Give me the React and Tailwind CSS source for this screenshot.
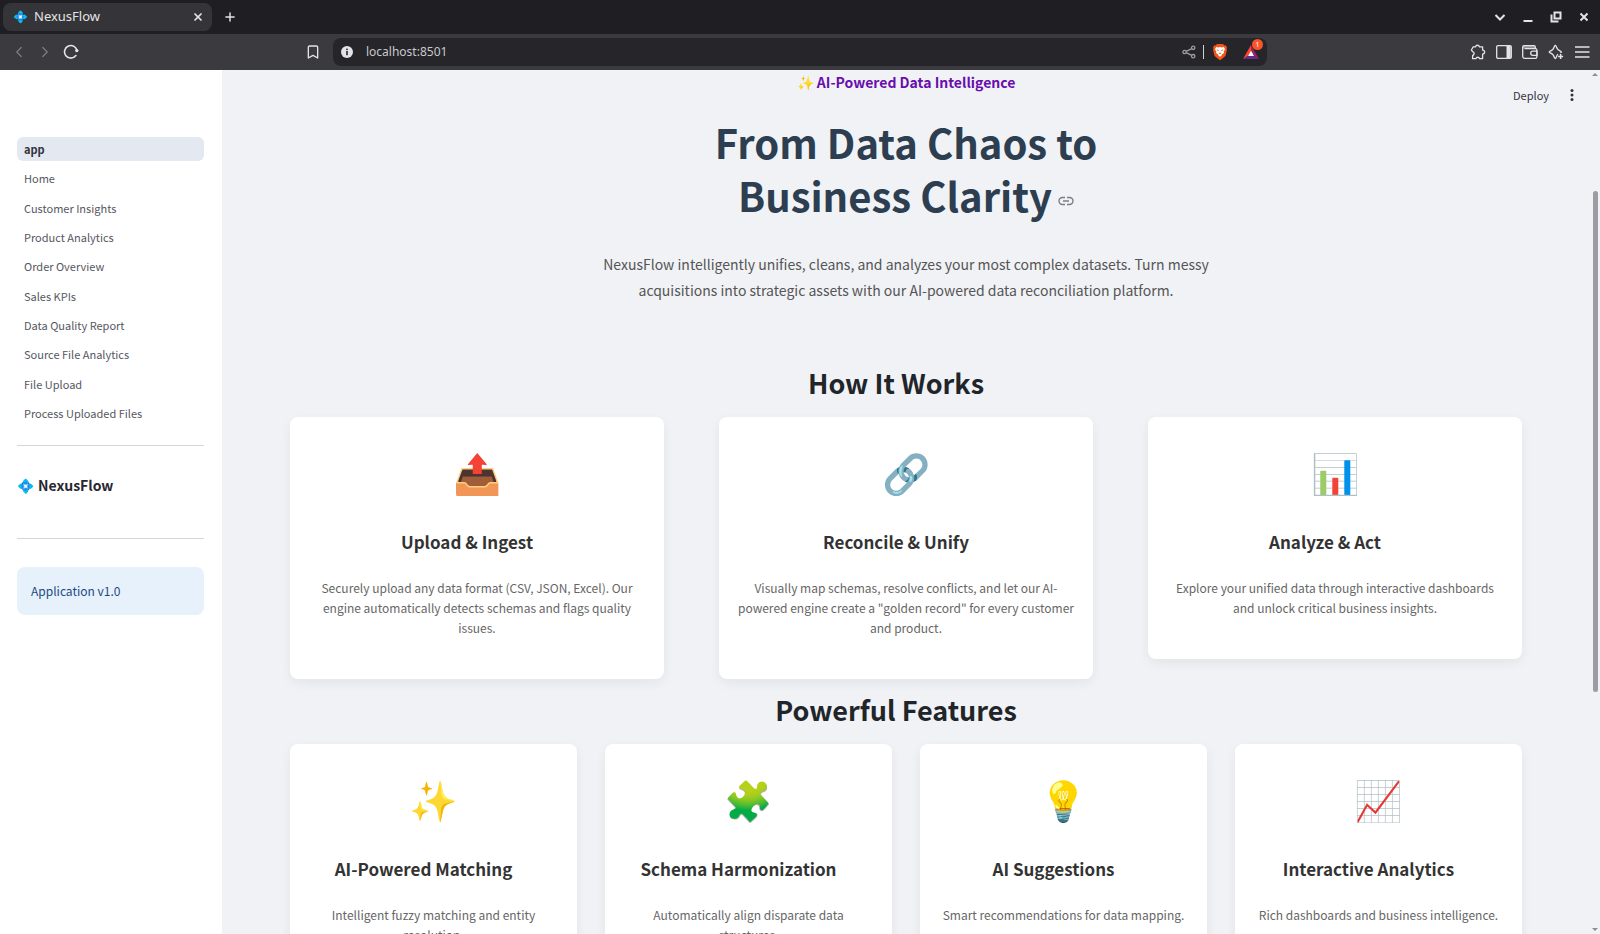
import { Bookmark, ChevronLeft, ChevronRight, Plus, X } from "lucide-react";

const pages = [
  "app",
  "Home",
  "Customer Insights",
  "Product Analytics",
  "Order Overview",
  "Sales KPIs",
  "Data Quality Report",
  "Source File Analytics",
  "File Upload",
  "Process Uploaded Files",
];

const steps = [
  {
    icon: "📤",
    title: "Upload & Ingest",
    text: "Securely upload any data format (CSV, JSON, Excel). Our engine automatically detects schemas and flags quality issues.",
  },
  {
    icon: "🔗",
    title: "Reconcile & Unify",
    text: 'Visually map schemas, resolve conflicts, and let our AI-powered engine create a "golden record" for every customer and product.',
  },
  {
    icon: "📊",
    title: "Analyze & Act",
    text: "Explore your unified data through interactive dashboards and unlock critical business insights.",
  },
];

const features = [
  { icon: "✨", title: "AI-Powered Matching", text: "Intelligent fuzzy matching and entity resolution." },
  { icon: "🧩", title: "Schema Harmonization", text: "Automatically align disparate data structures." },
  { icon: "💡", title: "AI Suggestions", text: "Smart recommendations for data mapping." },
  { icon: "📈", title: "Interactive Analytics", text: "Rich dashboards and business intelligence." },
];

function ReloadIcon() {
  return (
    <svg viewBox="0 0 16 16" className="size-4" fill="none" stroke="currentColor" strokeWidth="1.6" strokeLinecap="round">
      <path d="M12.9 11.6a6.3 6.3 0 1 1 1.2-4.6" />
      <circle cx="13.8" cy="6.6" r="1.7" fill="currentColor" stroke="none" />
    </svg>
  );
}

function InfoIcon() {
  return (
    <svg viewBox="0 0 12 12" className="size-3">
      <circle cx="6" cy="6" r="6" fill="#e4e4e6" />
      <rect x="5.2" y="5" width="1.6" height="4.2" fill="#26252a" />
      <circle cx="6" cy="3.3" r="0.9" fill="#26252a" />
    </svg>
  );
}

function ShareIcon() {
  return (
    <svg viewBox="0 0 14 14" className="size-[14px]" fill="none" stroke="currentColor" strokeWidth="1.3">
      <circle cx="2.6" cy="7" r="1.7" />
      <circle cx="11.2" cy="2.8" r="1.7" />
      <circle cx="11.2" cy="11.2" r="1.7" />
      <path d="M4.2 6.3 9.7 3.6M4.2 7.7l5.5 2.7" />
    </svg>
  );
}

function BraveShield() {
  return (
    <svg viewBox="0 0 14 16" className="h-4 w-[14px]">
      <path
        d="M4 0h6l1.4 1.4 1.3-.2L14 3.400l-.4 1.200.4 1.200-1.600 6.200L7.800 15.700a1.400 1.400 0 0 1-1.600 0L1.600 12 0 5.800l.4-1.200L0 3.400l1.300-2.200 1.300.2z"
        fill="#f1561d"
      />
      <path
        d="m3.200 3 2 .4L7 2.900l1.800.5 2-.4 1.300 2.200-1.500 2.300.4 1.600-2.300 1.400.3.500-2 1.700-2-1.700.3-.5L3 9.100l.4-1.600-1.500-2.300z"
        fill="#fff"
      />
      <path d="m3.600 5.200 2.100.7-.5 1.700zM10.400 5.200l-2.100.7.5 1.700zM5.600 9.300 7 8.600l1.400.7-1.400 1z" fill="#f1561d" />
    </svg>
  );
}

function BatIcon() {
  return (
    <svg viewBox="0 0 16 14" className="h-[14px] w-4">
      <path d="M8 0 0 14l5-3 3-5.5z" fill="#ff4724" />
      <path d="M8 0v5.500l3 5.500 5 3z" fill="#9e1f63" />
      <path d="M0 14h16l-5-3H5z" fill="#662d91" />
      <path d="m8 5.500 3 5.500H5z" fill="#fff" />
    </svg>
  );
}

function ExtensionIcon() {
  return (
    <svg viewBox="0 0 16 16" className="size-4" fill="none" stroke="currentColor" strokeWidth="1.3" strokeLinejoin="round">
      <path d="M3.200 2.800h2.300a2 2 0 0 1 3.900 0h3.200v3.300a2 2 0 0 1 0 4v4.600H9.600a1.900 1.900 0 0 0-3.700 0H2.600v-3.200a2 2 0 0 0 0-3.900L1.400 6z" />
    </svg>
  );
}

function SidePanelIcon() {
  return (
    <svg viewBox="0 0 16 14" className="h-[14px] w-4">
      <rect x="0.7" y="0.7" width="14.6" height="12.6" rx="1.3" fill="none" stroke="currentColor" strokeWidth="1.3" />
      <path d="M10.500 1h4.200v12h-4.200z" fill="currentColor" />
    </svg>
  );
}

function WalletIcon() {
  return (
    <svg viewBox="0 0 16 14" className="h-[14px] w-4" fill="none" stroke="currentColor" strokeWidth="1.3">
      <path d="M1 1h12v2.500H1z" fill="currentColor" fillOpacity="0.5" stroke="none" />
      <path d="M13.300 3.600V2A1.300 1.300 0 0 0 12 .7H2A1.400 1.400 0 0 0 .7 2v9.500a1.800 1.800 0 0 0 1.800 1.800h10.800a1.600 1.600 0 0 0 1.600-1.600V5.200a1.600 1.600 0 0 0-1.600-1.600H2.500" />
      <path d="M15 6.200h-4.200a2.100 2.100 0 0 0 0 4.200H15z" />
    </svg>
  );
}

function SparkleIcon() {
  return (
    <svg viewBox="0 0 16 16" className="size-4" fill="none" stroke="currentColor" strokeWidth="1.300" strokeLinejoin="round">
      <path d="M10 10.300c-1 .7-1.400 1.600-1.800 3.300q-.9 2-1.800 0C5.800 11 5 9.900 2.200 8.900q-2-.9 0-1.800C5 6.200 5.800 5 6.400 2.400q.9-2 1.800 0C8.900 5 9.800 6.200 12.400 7.100q2 .9 0 1.800" />
      <path d="M12.600 10v5M10.100 12.500h5" strokeWidth="1.500" />
    </svg>
  );
}

function MenuIcon() {
  return (
    <svg viewBox="0 0 16 16" className="size-4" stroke="currentColor" strokeWidth="1.4">
      <path d="M1 3h14.500M1 8h14.500M1 13h14.500" />
    </svg>
  );
}

function AnchorIcon() {
  return (
    <svg viewBox="0 0 16 10" className="h-[10px] w-4" fill="none" stroke="#7a7e88" strokeWidth="1.400">
      <path d="M7 1.500H4.500a3.500 3.500 0 0 0 0 7H7M9 1.500h2.500a3.500 3.500 0 0 1 0 7H9M5 5h6" />
    </svg>
  );
}

const windowButtons = [
  { label: "Search tabs", drawing: <path d="M3.500 6 8 10.500 12.500 6" /> },
  { label: "Minimize", drawing: <path d="M3.500 12h9" /> },
  {
    label: "Restore",
    drawing: (
      <>
        <path d="M6.500 3.500h6v6h-6z" />
        <path d="M3.500 5.500v7h7" />
      </>
    ),
  },
  { label: "Close window", drawing: <path d="m4.500 4.500 7 7M11.500 4.500l-7 7" /> },
];

function BrowserChrome() {
  return (
    <header className="shrink-0 font-['Noto_Sans',sans-serif] text-[#e4e4e6]">
      <div className="flex h-[34px] items-center bg-[#1f1e23] pr-2 pl-[3px]">
        <div className="flex h-7 w-[209px] items-center rounded-lg bg-[#353439] pr-[6px] pl-[10px]">
          <span className="w-[21px] text-[12px]">💠</span>
          <span className="flex-1 text-[13px]">NexusFlow</span>
          <button aria-label="Close tab" className="p-[2px]">
            <X className="size-3" strokeWidth={3.5} />
          </button>
        </div>
        <button aria-label="New tab" className="ml-[11px]">
          <Plus className="size-[14px]" strokeWidth={2.5} />
        </button>
        <div className="ml-auto flex gap-3">
          {windowButtons.map((b) => (
            <button key={b.label} aria-label={b.label}>
              <svg viewBox="0 0 16 16" className="size-4" fill="none" stroke="currentColor" strokeWidth="2">
                {b.drawing}
              </svg>
            </button>
          ))}
        </div>
      </div>
      <div className="flex h-9 items-center bg-[#3b3a3f] px-[10px]">
        <button aria-label="Back" className="text-[#7b7a80]">
          <ChevronLeft className="size-[18px]" strokeWidth={1.8} />
        </button>
        <button aria-label="Forward" className="ml-2 text-[#7b7a80]">
          <ChevronRight className="size-[18px]" strokeWidth={1.8} />
        </button>
        <button aria-label="Reload" className="ml-[9px]">
          <ReloadIcon />
        </button>
        <button aria-label="Bookmark" className="ml-[226px]">
          <Bookmark className="size-4" strokeWidth={2} />
        </button>
        <div className="ml-3 flex h-7 w-[934px] items-center rounded-lg bg-[#26252a] px-2">
          <InfoIcon />
          <input
            aria-label="Address"
            defaultValue="localhost:8501"
            className="ml-[13px] min-w-0 flex-1 bg-transparent text-[12px] text-[#c9c9cc] outline-none"
          />
          <button aria-label="Share" className="text-[#9d9ca1]">
            <ShareIcon />
          </button>
          <span className="mx-[7px] h-[14px] w-px bg-[#d0d0d3]" />
          <button aria-label="Shields" className="ml-[2px]">
            <BraveShield />
          </button>
          <button aria-label="Rewards" className="relative ml-4">
            <BatIcon />
            <span className="absolute -top-[6px] -right-1 size-[11px] rounded-full bg-[#fb542b] text-center text-[7px] leading-[11px] text-white">
              1
            </span>
          </button>
        </div>
        <div className="ml-auto flex items-center gap-[10px]">
          <button aria-label="Extensions">
            <ExtensionIcon />
          </button>
          <button aria-label="Side panel">
            <SidePanelIcon />
          </button>
          <button aria-label="Wallet">
            <WalletIcon />
          </button>
          <button aria-label="Assistant">
            <SparkleIcon />
          </button>
          <button aria-label="Menu">
            <MenuIcon />
          </button>
        </div>
      </div>
    </header>
  );
}

function Sidebar() {
  return (
    <aside className="w-[222px] shrink-0 bg-white pt-[67px] pr-[18px] pl-[17px]">
      <nav>
        <ul className="flex h-[288px] flex-col justify-between">
          {pages.map((page, i) => (
            <li key={page}>
              <a
                href="#"
                className={
                  i === 0
                    ? "block rounded-md bg-[#e4e8f0] px-[7px] text-[11px] leading-6 font-bold text-[#31333f]"
                    : "block px-[7px] text-[11px] leading-6 text-[#55575f]"
                }
              >
                {page}
              </a>
            </li>
          ))}
        </ul>
      </nav>
      <hr className="mt-5 border-[#d5d6d8]" />
      <h2 className="mt-[27px] flex items-center gap-1 text-[14px] leading-6 font-bold text-[#262730]">
        <span>💠</span>NexusFlow
      </h2>
      <hr className="mt-[41px] border-[#d5d6d8]" />
      <p className="mt-7 rounded-lg bg-[#e6f1fc] px-[14px] py-3 text-[12px] leading-6 text-[#1c4a80]">
        Application v1.0
      </p>
    </aside>
  );
}

function Card({ icon, title, text }) {
  return (
    <article className="rounded-lg bg-white px-[18px] pt-[26px] pb-[41px] text-center shadow-[0_4px_12px_rgba(0,0,0,0.06)]">
      <div className="h-14 text-[39px] leading-[56px]">{icon}</div>
      <h3 className="mt-[29px] pr-5 text-[17px] leading-7 font-bold text-[#333]">{title}</h3>
      <p className="mt-[22px] text-[12px] leading-5 text-[#666]">{text}</p>
    </article>
  );
}

function SectionTitle({ children }) {
  return <h2 className="pr-5 text-center text-[27px] leading-9 font-bold text-[#212529]">{children}</h2>;
}

export default function App() {
  return (
    <div className="flex h-screen flex-col overflow-hidden bg-[#f0f2f6] font-['Noto_Sans_CJK_SC',sans-serif]">
      <BrowserChrome />
      <div className="relative flex min-h-0 flex-1">
        <Sidebar />
        <main className="min-w-0 flex-1 px-[68px]">
          <p className="text-center text-[14px] leading-6 font-bold text-[#6a0dad]">✨ AI-Powered Data Intelligence</p>
          <h1 className="mx-auto mt-[22px] max-w-[440px] text-center text-[40px] leading-[53px] font-bold text-[#2c3e50]">
            From Data Chaos to Business Clarity
            <a href="#" aria-label="Link to heading" className="ml-[6px] inline-block align-middle">
              <AnchorIcon />
            </a>
          </h1>
          <p className="mx-auto mt-[29px] max-w-[640px] text-center text-[14px] leading-[26px] text-[#555]">
            NexusFlow intelligently unifies, cleans, and analyzes your most complex datasets. Turn messy acquisitions
            into strategic assets with our AI-powered data reconciliation platform.
          </p>
          <div className="mt-[62px]">
            <SectionTitle>How It Works</SectionTitle>
          </div>
          <div className="mt-4 grid grid-cols-3 items-start gap-[55px]">
            {steps.map((s) => (
              <Card key={s.title} {...s} />
            ))}
          </div>
          <div className="mt-[13px]">
            <SectionTitle>Powerful Features</SectionTitle>
          </div>
          <div className="mt-4 grid grid-cols-4 items-start gap-7">
            {features.map((f) => (
              <Card key={f.title} {...f} />
            ))}
          </div>
        </main>
        <div className="absolute top-3 right-5 flex items-center gap-[15px]">
          <button className="text-[11px] leading-[26px] text-[#31333f]">Deploy</button>
          <button aria-label="Main menu">
            <svg viewBox="0 0 16 16" className="size-4" fill="#31333f">
              <circle cx="8" cy="3.500" r="1.500" />
              <circle cx="8" cy="8" r="1.500" />
              <circle cx="8" cy="12.500" r="1.500" />
            </svg>
          </button>
        </div>
        <div className="flex w-[10px] shrink-0 flex-col items-center py-[3px]">
          <svg viewBox="0 0 6 3" className="h-[3px] w-[6px]" fill="#8b8d92">
            <path d="M3 0l3 3H0z" />
          </svg>
          <div className="flex w-full flex-1 flex-col items-center pt-[115px]">
            <div className="h-[68%] w-[5px] rounded-full bg-[#9a9da3]" />
          </div>
          <svg viewBox="0 0 6 3" className="h-[3px] w-[6px]" fill="#8b8d92">
            <path d="M0 0h6L3 3z" />
          </svg>
        </div>
      </div>
    </div>
  );
}
